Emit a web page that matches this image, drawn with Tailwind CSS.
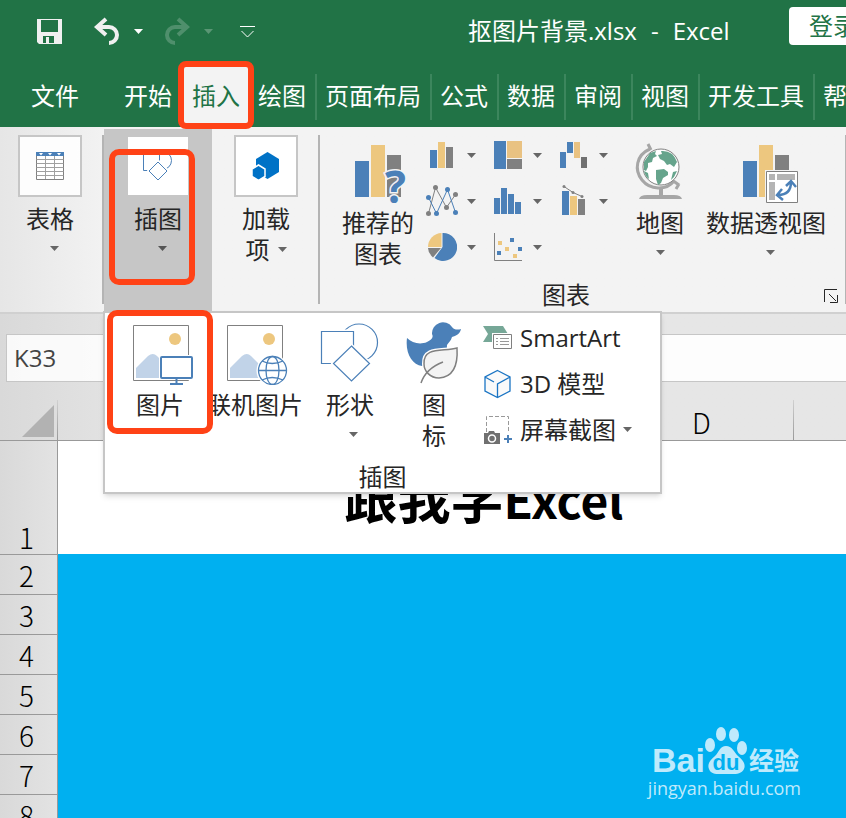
<!DOCTYPE html>
<html lang="zh-CN">

<head>
    <meta charset="UTF-8">
    <meta name="viewport" content="width=device-width, initial-scale=1.0">
    <title>抠图片背景.xlsx - Excel</title>
    <script src="https://cdn.jsdelivr.net/npm/@tailwindcss/browser@4"></script>
</head>

<body class="h-screen overflow-hidden flex flex-col bg-white text-2xl text-[#262626] font-['Open_Sans','Noto_Sans_CJK_SC',sans-serif]">
    <svg class="hidden">
        <symbol id="caret" viewBox="0 0 9 5">
            <path d="M0 0h9L4.5 5z" fill="currentColor" />
        </symbol>
    </svg>

    <!-- title bar and tabs -->
    <header class="bg-[#217346] text-white shrink-0">
        <div class="flex items-center h-[67px] pb-[5px] relative">
            <button aria-label="保存" class="ml-9">
                <svg class="w-7 h-7" viewBox="0 0 28 28">
                    <path d="M1 2h25v25H3l-2-2zM5 3v12h17V3zM7 19v7h3v-6h3v6h5v-7z" fill="#f0f0f0" fill-rule="evenodd" />
                </svg>
            </button>
            <button aria-label="撤消" class="ml-[29px] flex items-center gap-[13px]">
                <svg class="w-7 h-7" viewBox="0 0 28 28">
                    <path d="M13 2L4 10l9 8M4 10h12a8 8 0 0 1 0 16" fill="none" stroke="#f0f0f0" stroke-width="4" />
                </svg>
                <svg class="w-[9px] h-[5px]"><use href="#caret" /></svg>
            </button>
            <button aria-label="恢复" class="ml-5 flex items-center gap-[13px] text-[#5a9674]" disabled>
                <svg class="w-7 h-7" viewBox="0 0 28 28">
                    <path d="M15 2l9 8-9 8M24 10H12a8 8 0 0 0 0 16" fill="none" stroke="#4f8f6c" stroke-width="4" />
                </svg>
                <svg class="w-[9px] h-[5px]"><use href="#caret" /></svg>
            </button>
            <button aria-label="自定义快速访问工具栏" class="ml-[27px]">
                <svg class="w-4 h-4" viewBox="0 0 16 16">
                    <path d="M0 3.500h15M1.500 8l6 6 6-6" fill="none" stroke="#fff" />
                </svg>
            </button>
            <h1 class="ml-[212px] flex gap-[14px] whitespace-nowrap"><span>抠图片背景.xlsx</span><span>-</span><span>Excel</span></h1>
            <button class="absolute left-[789px] top-[7px] h-[38px] px-5 rounded-sm bg-white text-[#217346] whitespace-nowrap leading-[38px]">登录</button>
        </div>
        <nav class="flex items-center h-[60px] whitespace-nowrap leading-[44px]">
            <a href="#" class="ml-[31px] mr-[35px] pb-[2px]">文件</a>
            <a href="#" class="pl-[10px] pr-3 pb-[2px]">开始</a>
            <a href="#" class="relative z-20 self-stretch bg-[#f3f3f3] text-[#217346] px-2 pb-[2px] flex items-center">插入
                <span class="absolute -left-[6px] -top-[6px] w-[76px] h-[68px] rounded-lg border-[6px] border-[#ff4216]"></span>
            </a>
            <a href="#" class="pl-[10px] pr-[9px] pb-[2px]">绘图</a>
            <a href="#" class="border-l-2 border-[#3c865d] pl-2 pr-[9px] pb-[2px]">页面布局</a>
            <a href="#" class="border-l-2 border-[#3c865d] pl-2 pr-[9px] pb-[2px]">公式</a>
            <a href="#" class="border-l-2 border-[#3c865d] pl-2 pr-[9px] pb-[2px]">数据</a>
            <a href="#" class="border-l-2 border-[#3c865d] pl-2 pr-[9px] pb-[2px]">审阅</a>
            <a href="#" class="border-l-2 border-[#3c865d] pl-2 pr-[9px] pb-[2px]">视图</a>
            <a href="#" class="border-l-2 border-[#3c865d] pl-2 pr-[9px] pb-[2px]">开发工具</a>
            <a href="#" class="border-l-2 border-[#3c865d] pl-2 pr-[9px] pb-[2px]">帮助</a>
        </nav>
    </header>

    <!-- ribbon -->
    <section class="relative z-10 flex shrink-0 h-[187px] border-b-2 border-[#d0d0d0] bg-linear-to-r from-[#e6e6e6] to-[#f3f3f3] to-[110px] leading-[31px] whitespace-nowrap">
        <button class="shrink-0 w-[102px] pt-2 pr-[2px] flex flex-col items-center">
            <span class="w-16 h-[62px] bg-white/90 border-2 border-[#c6c6c6] flex items-center justify-center mb-[6px]">
                <svg class="w-7 h-7" viewBox="0 0 28 28">
                    <path d="M.5.5h27v27H.5z" fill="#fff" stroke="#808080" />
                    <path d="M.5 7.500h27M.5 11.500h27M.5 15.500h27M.5 19.500h27M.5 23.500h27M9.500 4v23M18.500 4v23" stroke="#a0a0a0" />
                    <path d="M0 0h28v4H0z" fill="#4b80b8" />
                    <path d="M3 1h4L5 3.500zM12 1h4l-2 2.500zM21 1h4l-2 2.500z" fill="#fff" />
                </svg>
            </span>
            表格
            <svg class="w-[9px] h-[5px] mt-3 ml-2 text-[#666]"><use href="#caret" /></svg>
        </button>
        <div class="shrink-0 w-[2px] h-[169px] mt-2 bg-[#b4b4b4]"></div>
        <div class="shrink-0 relative w-[108px] mt-[2px] bg-[#c6c6c6]">
            <button class="w-full h-full pt-2 flex flex-col items-center justify-start" aria-expanded="true">
                <span class="w-[60px] h-[58px] bg-white flex items-center justify-center mb-2">
                    <svg class="w-[30px] h-[30px]" viewBox="0 0 30 30" fill="none" stroke="#4b80b8">
                        <circle cx="19.500" cy="9.500" r="9" />
                        <path d="M.5 3.500h16v16H.5z" fill="#fff" />
                        <path d="M15 10l9 9.500-9 9-9-9z" fill="#fff" stroke="#fff" stroke-width="3" />
                        <path d="M15 11l9 9-9 9-9-9z" fill="#fff" />
                    </svg>
                </span>
                插图
                <svg class="w-[9px] h-[5px] mt-3 ml-2 text-[#555]"><use href="#caret" /></svg>
            </button>
            <span class="absolute left-[5px] top-5 w-[86px] h-[136px] rounded-[10px] border-[6px] border-[#ff4216]"></span>

            <!-- drop-down gallery of the group -->
            <div class="absolute -left-px top-[182px] w-[559px] h-[183px] bg-white border-2 border-[#c6c6c6] shadow-md">
                <div class="flex items-start pt-2">
                    <button class="ml-2 w-[94px] flex flex-col items-center">
                        <svg class="w-[66px] h-[64px] mb-1" viewBox="0 0 66 64">
                            <path d="M6.500 4.500h55v55H6.500z" fill="#fff" stroke="#808080" />
                            <circle cx="48" cy="18" r="6" fill="#edc77f" />
                            <path d="M9 57V47l12-12q5-4 9 0l12 12v10z" fill="#c1d3e8" />
                            <path d="M32 34h36v25H32z" fill="#fff" />
                            <rect x="34" y="36" width="31" height="21" rx="1" fill="#fff" stroke="#4b80b8" stroke-width="2" />
                            <path d="M49.500 58v5M43 63h13" stroke="#4b80b8" stroke-width="2" />
                        </svg>
                        图片
                    </button>
                    <button class="w-24 flex flex-col items-center">
                        <svg class="w-[66px] h-[64px] mb-1" viewBox="0 0 66 64">
                            <path d="M5.500 4.500h55v55h-55z" fill="#fff" stroke="#808080" />
                            <circle cx="47" cy="18" r="6" fill="#edc77f" />
                            <path d="M8 57V47l12-12q5-4 9 0l12 12v10z" fill="#c1d3e8" />
                            <circle cx="50.500" cy="49.500" r="16" fill="#fff" />
                            <g fill="none" stroke="#4b80b8" stroke-width="1.300">
                                <circle cx="50.500" cy="49.500" r="14" />
                                <ellipse cx="50.500" cy="49.500" rx="6.500" ry="14" />
                                <path d="M36.500 49.500h28M40 40q10 5 21 0M40 59q10-5 21 0" />
                            </g>
                        </svg>
                        联机图片
                    </button>
                    <button class="w-[94px] flex flex-col items-center">
                        <svg class="w-[66px] h-[64px] mb-1" viewBox="0 0 66 64" fill="none" stroke="#4b80b8" stroke-width="1.200">
                            <circle cx="42" cy="21.500" r="18.500" />
                            <path d="M4.500 10.500h32v32h-32z" fill="#fff" stroke="#fff" stroke-width="4" />
                            <path d="M4.500 10.500h32v32h-32z" fill="#fff" />
                            <path d="M34.500 25l18 17.500-18 17.500-18-17.500z" fill="#fff" stroke="#fff" stroke-width="4" />
                            <path d="M34.500 25l18 17.500-18 17.500-18-17.500z" fill="#fff" />
                        </svg>
                        形状
                        <svg class="w-[9px] h-[5px] mt-3 ml-[7px] text-[#666]"><use href="#caret" /></svg>
                    </button>
                    <button class="w-[74px] flex flex-col items-center">
                        <svg class="w-[66px] h-[64px] mb-1" viewBox="0 0 66 64">
                            <path d="M6 17c5 5 13 7 20 4 4-2 7-4 5-8a11 11 0 0 1 20-7c2 3 6 3 9 2-1 5-5 7-9 8-1 4-4 6-5 8 0 4-1 6-1 6L30 42l-9 3C11 44 4 32 6 17z" fill="#4b80b8" />
                            <path d="M56 27C43 31 22 25 23 43c0 7 6 14 15 14 15-1 19-14 18-30z" fill="#f3f3f3" stroke="#fff" stroke-width="4" />
                            <path d="M56 27C43 31 22 25 23 43c0 7 6 14 15 14 15-1 19-14 18-30z" fill="#f3f3f3" stroke="#808080" stroke-width="1.500" />
                            <path d="M20 62c3-9 9-16 22-21" fill="none" stroke="#808080" stroke-width="1.500" />
                        </svg>
                        <span>图<br>标</span>
                    </button>
                    <div class="ml-3 pt-px flex flex-col gap-[15px]">
                        <button class="flex items-center gap-[7px]">
                            <svg class="w-[30px] h-[30px]" viewBox="0 0 30 30">
                                <path d="M0 3h20l5 8-5 8H0l5-8z" fill="#76a797" />
                                <path d="M9 10h22v18H9z" fill="#fff" />
                                <path d="M10.500 11.500h18v14h-18z" fill="#fff" stroke="#808080" />
                                <path d="M13 15.500h2m2 0h9M13 18.500h2m2 0h9M13 21.500h2m2 0h9" stroke="#999" />
                            </svg>
                            SmartArt
                        </button>
                        <button class="flex items-center gap-[7px]">
                            <svg class="w-[30px] h-[30px]" viewBox="0 0 30 30">
                                <path d="M14.500 1.500L27 8v14l-12.500 6.500L2 22V8zM2 8l9 5M14.500 28V15L27 8" fill="#fafafa" stroke="#1b75c4" stroke-width="1.300" />
                            </svg>
                            3D 模型
                        </button>
                        <button class="flex items-center gap-[7px]">
                            <svg class="w-[30px] h-[30px]" viewBox="0 0 30 30">
                                <path d="M3.500 17V1.500h22V18" fill="none" stroke="#999" stroke-dasharray="4 2" />
                                <path d="M1 18h4l1-2h5l1 2h5v11H1z" fill="#707070" />
                                <circle cx="9" cy="23.500" r="3.500" fill="#707070" stroke="#fff" stroke-width="1.500" />
                                <path d="M25 20v8M21 24h8" stroke="#4b80b8" stroke-width="2" />
                            </svg>
                            屏幕截图
                            <svg class="w-[9px] h-[5px] text-[#666]"><use href="#caret" /></svg>
                        </button>
                    </div>
                </div>
                <p class="absolute inset-x-0 bottom-0 text-center leading-[31px]">插图</p>
                <span class="absolute left-[2px] -top-[3px] w-[106px] h-[124px] rounded-[10px] border-[6px] border-[#ff4216]"></span>
            </div>
        </div>
        <button class="shrink-0 w-[106px] pt-2 pl-[2px] flex flex-col items-center">
            <span class="w-16 h-[62px] bg-white border-2 border-[#c6c6c6] flex items-center justify-center mb-[6px]">
                <svg class="w-7 h-7" viewBox="0 0 28 28">
                    <path d="M15.500 0L27 7v13l-11.500 7L4 20V7z" fill="#0072c6" />
                    <path d="M6.500 13l6.500 4v7.500l-6.500 4-6.500-4V17z" fill="#0072c6" stroke="#fff" stroke-width="1.500" />
                </svg>
            </span>
            加载
            <span class="flex items-center gap-2">项 <svg class="w-[9px] h-[5px] text-[#666]"><use href="#caret" /></svg></span>
        </button>
        <div class="shrink-0 w-[2px] h-[169px] mt-2 bg-[#b4b4b4]"></div>

        <div class="shrink-0 relative flex">
            <button class="ml-[22px] pt-4 self-start flex flex-col items-center">
                <svg class="w-[60px] h-[62px] mb-[2px]" viewBox="0 0 60 62">
                    <path d="M7 18h14v36H7z" fill="#4b80b8" />
                    <path d="M23 2h14v52H23z" fill="#edc77f" />
                    <path d="M39 12h14v42H39z" fill="#808080" />
                    <text x="37" y="60" font-family="Open Sans" font-size="44" font-weight="700" fill="#4b80b8" stroke="#f3f3f3" stroke-width="3" paint-order="stroke">?</text>
                </svg>
                <span>推荐的<br>图表</span>
            </button>
            <div class="grid grid-cols-[66px_66px_66px] auto-rows-[46px] pt-[5px] ml-[13px] self-start text-[#666]">
                <button aria-label="柱形图" class="flex items-center gap-[10px]">
                    <svg class="w-[30px] h-[30px]" viewBox="0 0 30 30">
                        <path d="M3 10h7v18H3z" fill="#4b80b8" />
                        <path d="M11 2h7v26h-7z" fill="#edc77f" />
                        <path d="M19 7h7v21h-7z" fill="#808080" />
                    </svg>
                    <svg class="w-[9px] h-[5px]"><use href="#caret" /></svg>
                </button>
                <button aria-label="层次结构图" class="flex items-center gap-[10px]">
                    <svg class="w-[30px] h-[30px]" viewBox="0 0 30 30">
                        <path d="M1 1h12v28H1z" fill="#4b80b8" />
                        <path d="M14 1h15v17H14z" fill="#e9c282" />
                        <path d="M14 19h15v10H14z" fill="#808080" />
                    </svg>
                    <svg class="w-[9px] h-[5px]"><use href="#caret" /></svg>
                </button>
                <button aria-label="瀑布图" class="flex items-center gap-[10px]">
                    <svg class="w-[30px] h-[30px]" viewBox="0 0 30 30">
                        <path d="M1 12h6v16H1zM8 2h6v11H8z" fill="#4b80b8" />
                        <path d="M15 2h6v16h-6z" fill="#e9c282" />
                        <path d="M22 17h6v11h-6z" fill="#707070" />
                    </svg>
                    <svg class="w-[9px] h-[5px]"><use href="#caret" /></svg>
                </button>
                <button aria-label="折线图" class="flex items-center gap-[10px]">
                    <svg class="w-[30px] h-[30px] overflow-visible" viewBox="0 0 30 30">
                        <path d="M1.500 27.500l7-26 11 20 9-13" fill="none" stroke="#808080" />
                        <path d="M1.500 11.500l8 16 11-24 8 23" fill="none" stroke="#4b80b8" />
                        <g fill="#808080">
                            <circle cx="1.500" cy="27.500" r="2.500" />
                            <circle cx="8.500" cy="1.500" r="2.500" />
                            <circle cx="19.500" cy="21.500" r="2.500" />
                            <circle cx="28.500" cy="8.500" r="2.500" />
                        </g>
                        <g fill="#4b80b8">
                            <circle cx="1.500" cy="11.500" r="2.500" />
                            <circle cx="9.500" cy="27.500" r="2.500" />
                            <circle cx="20.500" cy="3.500" r="2.500" />
                            <circle cx="28.500" cy="26.500" r="2.500" />
                        </g>
                    </svg>
                    <svg class="w-[9px] h-[5px]"><use href="#caret" /></svg>
                </button>
                <button aria-label="统计图" class="flex items-center gap-[10px]">
                    <svg class="w-[30px] h-[30px]" viewBox="0 0 30 30">
                        <path d="M1 12h6v16H1zM8 2h6v26H8zM15 8h6v20h-6zM22 16h6v12h-6z" fill="#4b80b8" />
                    </svg>
                    <svg class="w-[9px] h-[5px]"><use href="#caret" /></svg>
                </button>
                <button aria-label="组合图" class="flex items-center gap-[10px]">
                    <svg class="w-[30px] h-[30px] overflow-visible" viewBox="0 0 30 30">
                        <path d="M3 5h7v24H3z" fill="#4b80b8" />
                        <path d="M11 10h7v19h-7z" fill="#edc77f" />
                        <path d="M19 13h7v16h-7z" fill="#808080" />
                        <path d="M5 .5l9 6 9 4" fill="none" stroke="#808080" />
                        <g fill="#808080">
                            <circle cx="5" cy=".5" r="1.500" />
                            <circle cx="14" cy="6.500" r="1.500" />
                            <circle cx="23" cy="10.500" r="1.500" />
                        </g>
                    </svg>
                    <svg class="w-[9px] h-[5px]"><use href="#caret" /></svg>
                </button>
                <button aria-label="饼图" class="flex items-center gap-[10px]">
                    <svg class="w-[30px] h-[30px]" viewBox="0 0 30 30">
                        <path d="M15.500 15V1a14 14 0 1 1-8 25z" fill="#4b80b8" />
                        <path d="M14.500 15V1a14 14 0 0 0-13.500 14z" fill="#edc77f" />
                        <path d="M14 16H1q0 5 5 9.500z" fill="#808080" />
                    </svg>
                    <svg class="w-[9px] h-[5px]"><use href="#caret" /></svg>
                </button>
                <button aria-label="散点图" class="flex items-center gap-[10px]">
                    <svg class="w-[30px] h-[30px]" viewBox="0 0 30 30">
                        <path d="M1.500 1v27.500H29" fill="none" stroke="#808080" />
                        <path d="M5 9h4v4H5zM12 15h4v4h-4zM20 22h4v4h-4z" fill="#edc77f" />
                        <path d="M17 6h4v4h-4zM25 15h4v4h-4zM4 19h4v4H4z" fill="#4b80b8" />
                    </svg>
                    <svg class="w-[9px] h-[5px]"><use href="#caret" /></svg>
                </button>
            </div>
            <button class="ml-[5px] pt-4 self-start flex flex-col items-center">
                <svg class="w-[60px] h-[62px] mb-[2px]" viewBox="0 0 60 62">
                    <path d="M18 1l3 6M20 6c-14 6-16 21-8 31s24 11 32 1M42 37l7 5M49 41l-3 5" fill="none" stroke="#a6a6a6" stroke-width="3" />
                    <circle cx="31" cy="24" r="18" fill="#fff" stroke="#808080" />
                    <path d="M14 19l6-9 6-2-1 3 2 2-4 2-1 4-4 1 0 4-2 4-2-1zM31 8q12-1 16 11l-3 5-4-3-3 1-3-4-4-2-2-4 4-1zM26 27l8-1 4 3 0 3-5 3-2 5-3 2-2-6zM43 29l4-1-3 6-3 3zM14 28l4 2 1 6q-4-3-5-8z" fill="#66a48c" />
                    <path d="M29 46h4v6h-4z" fill="#a6a6a6" />
                    <path d="M9 56q1-4 8-4h27q7 0 8 4z" fill="#a6a6a6" />
                </svg>
                地图
                <svg class="w-[9px] h-[5px] mt-3 text-[#666]"><use href="#caret" /></svg>
            </button>
            <button class="ml-4 pt-4 self-start flex flex-col items-center">
                <svg class="w-[66px] h-[62px] mb-[2px]" viewBox="0 0 66 62">
                    <path d="M10 18h14v36H10z" fill="#4b80b8" />
                    <path d="M26 2h14v52H26z" fill="#edc77f" />
                    <path d="M42 12h14v30H42z" fill="#808080" />
                    <path d="M32 27h36v34H32z" fill="#f3f3f3" />
                    <path d="M33.500 28.500h31v31h-31z" fill="#fff" stroke="#808080" />
                    <path d="M36 31h6v6h-6zM44 31h18v6H44zM36 39h6v18h-6z" fill="#b4b4b4" />
                    <path d="M45 52q13 0 13-13M49 46l-5 6 6 5M53 43l5-5 5 6" fill="none" stroke="#4b80b8" stroke-width="2.500" />
                </svg>
                数据透视图
                <svg class="w-[9px] h-[5px] mt-3 ml-2 text-[#666]"><use href="#caret" /></svg>
            </button>
            <p class="absolute left-[222px] bottom-[2px]">图表</p>
            <button aria-label="查看所有图表" class="absolute -right-3 bottom-[9px] flex">
                <svg class="w-[14px] h-[14px]" viewBox="0 0 14 14">
                    <path d="M.5 13V.5H13M5 5l7 7M13.500 6v7.500H6" fill="none" stroke="#262626" />
                </svg>
            </button>
        </div>
        <div class="shrink-0 w-[2px] h-[169px] mt-2 ml-[19px] bg-[#b4b4b4]"></div>
    </section>

    <!-- formula bar -->
    <section class="shrink-0 flex gap-4 pt-5 pl-[6px] bg-linear-to-r from-[#d9d9d9] to-[#e6e6e6] to-[150px]">
        <input type="text" aria-label="名称框" value="K33" class="w-[200px] h-12 px-[7px] pb-[2px] bg-white/85 border border-[#c6c6c6] text-[#444]">
        <input type="text" aria-label="编辑栏" class="flex-1 min-w-0 h-12 px-2 bg-[#fdfdfd] border border-r-0 border-[#c6c6c6]">
    </section>

    <!-- sheet -->
    <main class="flex-1 min-h-0 overflow-hidden bg-[#00b0f0]">
        <table class="w-[910px] table-fixed border-separate border-spacing-0 font-['Noto_Sans_CJK_SC',sans-serif]">
            <thead>
                <tr class="h-[59px] bg-linear-to-r from-[#d9d9d9] to-[#e6e6e6] to-[150px] text-black text-[28px] leading-9 align-bottom">
                    <th class="w-[58px] p-0 border-b border-[#999]">
                        <div class="flex items-end justify-between">
                            <svg class="w-8 h-8 ml-[22px] mb-[3px]" viewBox="0 0 32 32">
                                <path d="M32 0v32H0z" fill="#b2b2b2" />
                            </svg>
                            <span class="w-px h-10 bg-linear-to-b from-[#d0d0d0] to-[#999]"></span>
                        </div>
                    </th>
                    <th class="w-46 p-0 font-light border-b border-[#999]">A</th>
                    <th class="w-46 p-0 font-light border-b border-[#999]">B</th>
                    <th class="w-46 p-0 font-light border-b border-[#999]">C</th>
                    <th class="w-46 p-0 font-light border-b border-[#999]">
                        <div class="flex items-end"><span class="flex-1">D</span><span class="w-px h-10 bg-linear-to-b from-[#d0d0d0] to-[#999]"></span></div>
                    </th>
                    <th class="p-0 font-light border-b border-[#999]">E</th>
                </tr>
            </thead>
            <tbody id="rows" class="text-black text-[28px]">
                <tr class="h-[114px] align-bottom leading-[34px]">
                    <th class="p-0 pr-1 font-light bg-linear-to-r from-[#d9d9d9] to-[#e3e3e3] border-r border-b border-[#999]">1</th>
                    <td colspan="5" class="p-0 pb-[26px] bg-white border-b border-[#00b0f0] text-center text-[53px] leading-[60px] font-bold">跟我学<span class="text-5xl leading-[60px]">Excel</span></td>
                </tr>
            </tbody>
        </table>
    </main>

    <!-- watermark -->
    <div class="absolute right-[45px] bottom-[18px] text-[#bfeafc] font-['Open_Sans','Noto_Sans_CJK_SC',sans-serif]">
        <div class="flex items-end justify-end h-[50px]">
            <span class="text-[34px] leading-[38px] mb-[-3px] font-bold font-['Liberation_Sans']">Bai</span>
            <svg class="w-[42px] h-[50px]" viewBox="0 0 42 50" fill="currentColor">
                <ellipse cx="5" cy="19" rx="5" ry="7" />
                <ellipse cx="16" cy="8" rx="5" ry="7" />
                <ellipse cx="29" cy="9" rx="5" ry="7" />
                <ellipse cx="37" cy="22" rx="5" ry="7" />
                <path d="M21 20c6 0 8 6 12 10 5 4 8 8 6 13-3 6-10 5-18 5s-15 1-17-5c-2-5 1-9 6-13 4-4 5-10 11-10z" />
                <text x="21" y="44" text-anchor="middle" font-family="Liberation Sans" font-size="22" font-weight="700" fill="#00b0f0">du</text>
            </svg>
            <span class="text-[25px] leading-[32px] font-bold mx-[2px]">经验</span>
        </div>
        <p class="text-lg leading-6">jingyan.baidu.com</p>
    </div>

    <script>
        // fill in the remaining row headers
        const rows = document.getElementById('rows');
        for (let i = 2; i <= 8; i++) {
            const row = document.createElement('tr');
            row.className = 'h-10 leading-[34px]';
            row.innerHTML = '<th class="p-0 pr-1 font-light bg-linear-to-r from-[#d9d9d9] to-[#e3e3e3] border-r border-b border-[#999]">' + i + '</th><td colspan="5" class="p-0 bg-[#00b0f0]"></td>';
            rows.appendChild(row);
        }
    </script>
</body>

</html>
